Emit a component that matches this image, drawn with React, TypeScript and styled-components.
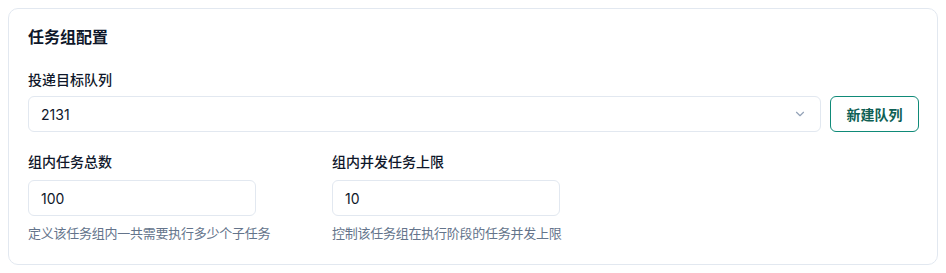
import React from "react";
import styled, { createGlobalStyle } from "styled-components";

const Global = createGlobalStyle`
  body {
    margin: 8px;
    background: #ffffff;
    font-family: Inter, "Noto Sans CJK SC", sans-serif;
    color: #111827;
  }
  * { box-sizing: border-box; }
`;

const Card = styled.section`
  width: 930px;
  border: 1px solid #e2e8f0;
  border-radius: 10px;
  padding: 16px 18px 21px 19px;
  background: #fff;
`;

const Title = styled.h2`
  margin: 0 0 21px 0;
  font-size: 16px;
  line-height: 24px;
  font-weight: 600;
  color: #0f172a;
`;

const Field = styled.div`
  display: flex;
  flex-direction: column;
`;

const Label = styled.label<{ $gap?: number }>`
  font-size: 14px;
  line-height: 20px;
  font-weight: 500;
  color: #0f172a;
  margin-bottom: ${(p) => p.$gap ?? 6}px;
`;

const SelectRow = styled.div`
  display: flex;
  gap: 9px;
  margin-bottom: 20px;
`;

const SelectBox = styled.div`
  flex: 1;
  height: 36px;
  border: 1px solid #e2e8f0;
  border-radius: 6px;
  display: flex;
  align-items: center;
  justify-content: space-between;
  padding: 0 13px 0 12px;
  font-size: 14px;
  color: #0f172a;
`;

const Button = styled.button`
  width: 89px;
  height: 36px;
  border: 1px solid #0f8a78;
  border-radius: 6px;
  background: #fff;
  color: #0f5f54;
  font-family: inherit;
  font-size: 14px;
  font-weight: 600;
  cursor: pointer;
`;

const Grid = styled.div`
  display: grid;
  grid-template-columns: 280px 280px;
  column-gap: 24px;
`;

const Input = styled.input`
  width: 228px;
  height: 36px;
  border: 1px solid #e2e8f0;
  border-radius: 6px;
  padding: 0 12px;
  font-family: inherit;
  font-size: 14px;
  color: #0f172a;
  outline: none;
`;

const Help = styled.p`
  margin: 7px 0 0 0;
  font-size: 13px;
  line-height: 20px;
  letter-spacing: -0.25px;
  color: #64748b;
`;

const Chevron = () => (
  <svg width="14" height="14" viewBox="0 0 24 24" fill="none" stroke="#94a3b8" strokeWidth="2" strokeLinecap="round" strokeLinejoin="round">
    <path d="m6 9 6 6 6-6" />
  </svg>
);

export default function App() {
  return (
    <>
      <Global />
      <Card>
        <Title>任务组配置</Title>
        <Field>
          <Label>投递目标队列</Label>
          <SelectRow>
            <SelectBox>
              <span>2131</span>
              <Chevron />
            </SelectBox>
            <Button>新建队列</Button>
          </SelectRow>
        </Field>
        <Grid>
          <Field>
            <Label $gap={8}>组内任务总数</Label>
            <Input defaultValue="100" />
            <Help>定义该任务组内一共需要执行多少个子任务</Help>
          </Field>
          <Field>
            <Label $gap={8}>组内并发任务上限</Label>
            <Input defaultValue="10" />
            <Help>控制该任务组在执行阶段的任务并发上限</Help>
          </Field>
        </Grid>
      </Card>
    </>
  );
}
